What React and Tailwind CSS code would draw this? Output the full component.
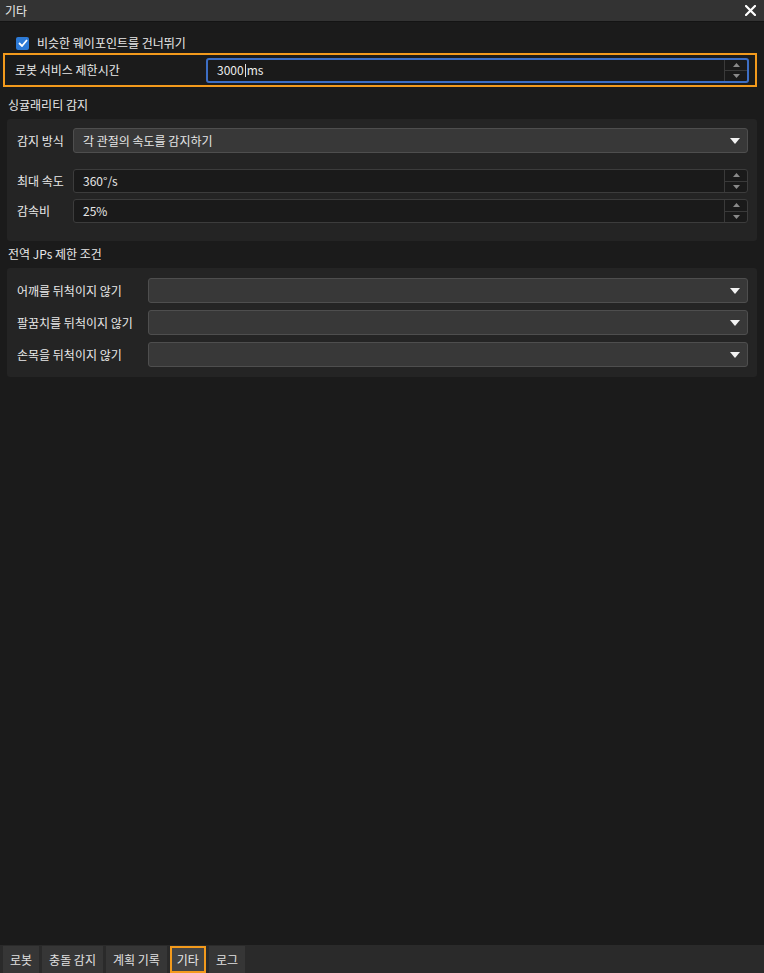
import React from "react"

const font = { fontFamily: '"Noto Sans CJK KR", "Noto Sans", sans-serif' }

function SpinButtons() {
  return (
    <div className="flex flex-col w-[23px] border-l border-[#3a3a3a] h-full">
      <div className="flex-1 flex items-center justify-center border-b border-[#3a3a3a]">
        <svg width="7" height="4" viewBox="0 0 7 4"><path d="M0 4 L3.5 0 L7 4 Z" fill="#8a8a8a" /></svg>
      </div>
      <div className="flex-1 flex items-center justify-center">
        <svg width="7" height="4" viewBox="0 0 7 4"><path d="M0 0 L3.5 4 L7 0 Z" fill="#8a8a8a" /></svg>
      </div>
    </div>
  )
}

function SpinBox({ value }) {
  return (
    <div className="flex-1 h-[24px] flex items-stretch bg-[#1a1a1a] border border-[#3c3c3c] rounded-[3px]">
      <div className="flex-1 flex items-center pl-[9px] text-[12px] text-[#e6e6e6]">{value}</div>
      <SpinButtons />
    </div>
  )
}

function ComboBox({ value }) {
  return (
    <div className="flex-1 h-[25px] flex items-center justify-between bg-[#383838] border border-[#4e4e4e] rounded-[3px] pl-[9px] pr-[7px]">
      <span className="text-[12px] text-[#e6e6e6]">{value}</span>
      <svg width="10" height="6" viewBox="0 0 10 6"><path d="M0 0 L10 0 L5 6 Z" fill="#f2f2f2" /></svg>
    </div>
  )
}

export default function App() {
  const tabs = ["로봇", "충돌 감지", "계획 기록", "기타", "로그"]
  return (
    <div className="w-[764px] h-[973px] bg-[#1b1b1b] flex flex-col text-[#e0e0e0]" style={font}>
      {/* title bar */}
      <div className="h-[22px] bg-[#333333] border-b border-[#141414] flex items-center justify-between pl-[5px] pr-[8px]">
        <span className="text-[12px] text-[#e8e8e8]">기타</span>
        <svg width="11" height="11" viewBox="0 0 11 11">
          <path d="M1 1 L10 10 M10 1 L1 10" stroke="#ffffff" strokeWidth="2.2" strokeLinecap="round" />
        </svg>
      </div>

      <div className="flex-1 flex flex-col">
        {/* checkbox */}
        <div className="flex items-center mt-[14px] ml-[16px] h-[14px]">
          <div className="w-[13px] h-[13px] bg-[#2d7ad6] rounded-[2px] flex items-center justify-center">
            <svg width="10" height="8" viewBox="0 0 10 8">
              <path d="M1 4 L4 7 L9 1" stroke="#ffffff" strokeWidth="1.8" fill="none" />
            </svg>
          </div>
          <span className="ml-[8px] text-[12px] text-[#e8e8e8]">비슷한 웨이포인트를 건너뛰기</span>
        </div>

        {/* highlighted row */}
        <div className="mt-[3px] ml-[3px] w-[754px] h-[34px] border-2 border-[#f39a1c] flex items-center">
          <span className="ml-[10px] w-[191px] text-[12px] text-[#e8e8e8]">로봇 서비스 제한시간</span>
          <div className="w-[543px] h-[25px] flex items-stretch bg-[#1a1a1a] border-2 border-[#3d6ec4] rounded-[3px]">
            <div className="flex-1 flex items-center pl-[9px] text-[12px] text-[#ececec]">
              3000<span className="inline-block w-px h-[13px] bg-[#e0e0e0] mx-[1px]"></span>ms
            </div>
            <SpinButtons />
          </div>
        </div>

        {/* singularity */}
        <div className="mt-[10px] ml-[8px] h-[16px] flex items-center text-[12px] text-[#e8e8e8]">싱귤래리티 감지</div>
        <div className="mt-[6px] ml-[7px] w-[750px] bg-[#242424] rounded-[3px] pt-[9px] pb-[18px] pl-[10px] pr-[9px] flex flex-col">
          <div className="flex items-center">
            <span className="w-[56px] text-[12px] text-[#e8e8e8]">감지 방식</span>
            <ComboBox value="각 관절의 속도를 감지하기" />
          </div>
          <div className="flex items-center mt-[16px]">
            <span className="w-[56px] text-[12px] text-[#e8e8e8]">최대 속도</span>
            <SpinBox value="360°/s" />
          </div>
          <div className="flex items-center mt-[6px]">
            <span className="w-[56px] text-[12px] text-[#e8e8e8]">감속비</span>
            <SpinBox value="25%" />
          </div>
        </div>

        {/* global JPs */}
        <div className="mt-[5px] ml-[8px] h-[16px] flex items-center text-[12px] text-[#e8e8e8]">전역 JPs 제한 조건</div>
        <div className="mt-[6px] ml-[7px] w-[750px] bg-[#242424] rounded-[3px] pt-[10px] pb-[10px] pl-[10px] pr-[9px] flex flex-col gap-[7px]">
          {["어깨를 뒤척이지 않기", "팔꿈치를 뒤척이지 않기", "손목을 뒤척이지 않기"].map((l) => (
            <div key={l} className="flex items-center">
              <span className="w-[131px] text-[12px] text-[#e8e8e8] whitespace-nowrap">{l}</span>
              <ComboBox value="" />
            </div>
          ))}
        </div>
      </div>

      {/* bottom tabs */}
      <div className="h-[28px] bg-[#2a2a2a] flex items-stretch pt-[1px] pl-[3px] gap-[3px]">
        {tabs.map((t) => (
          <div
            key={t}
            className={
              t === "기타"
                ? "px-[5px] flex items-center bg-[#444444] border-2 border-[#f39a1c] text-[12px] text-[#e8e8e8]"
                : "px-[7px] flex items-center bg-[#363636] text-[12px] text-[#e0e0e0]"
            }
          >
            {t}
          </div>
        ))}
      </div>
    </div>
  )
}
